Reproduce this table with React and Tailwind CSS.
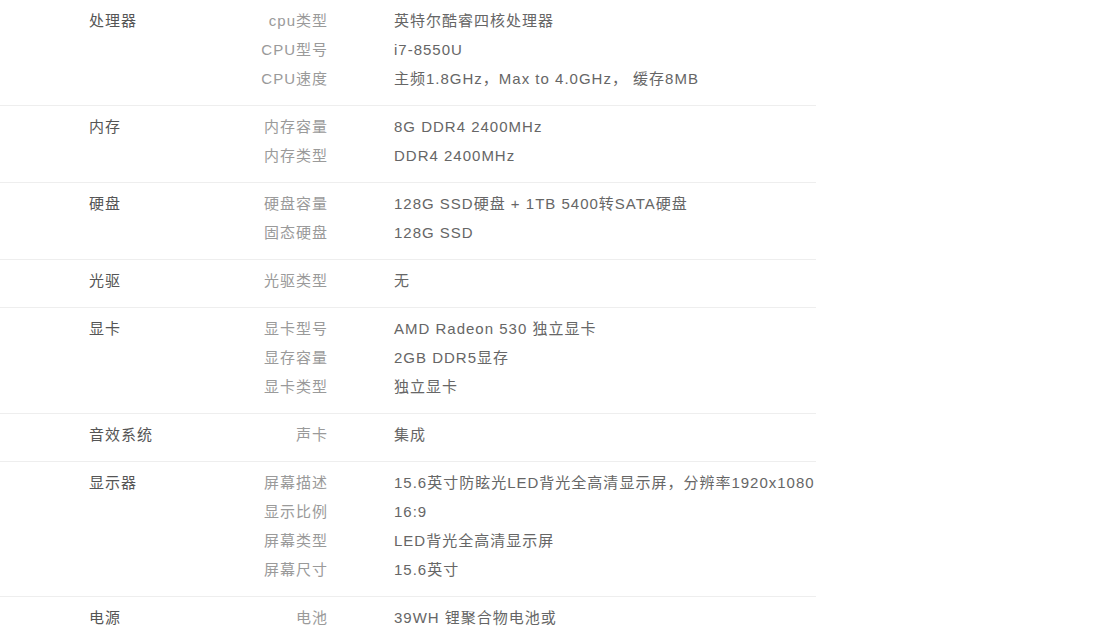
const specs = [
  {
    name: "处理器",
    rows: [
      ["cpu类型", "英特尔酷睿四核处理器"],
      ["CPU型号", "i7-8550U"],
      ["CPU速度", "主频1.8GHz，Max to 4.0GHz， 缓存8MB"],
    ],
  },
  {
    name: "内存",
    rows: [
      ["内存容量", "8G DDR4 2400MHz"],
      ["内存类型", "DDR4 2400MHz"],
    ],
  },
  {
    name: "硬盘",
    rows: [
      ["硬盘容量", "128G SSD硬盘 + 1TB 5400转SATA硬盘"],
      ["固态硬盘", "128G SSD"],
    ],
  },
  { name: "光驱", rows: [["光驱类型", "无"]] },
  {
    name: "显卡",
    rows: [
      ["显卡型号", "AMD Radeon 530 独立显卡"],
      ["显存容量", "2GB DDR5显存"],
      ["显卡类型", "独立显卡"],
    ],
  },
  { name: "音效系统", rows: [["声卡", "集成"]] },
  {
    name: "显示器",
    rows: [
      ["屏幕描述", "15.6英寸防眩光LED背光全高清显示屏，分辨率1920x1080"],
      ["显示比例", "16:9"],
      ["屏幕类型", "LED背光全高清显示屏"],
      ["屏幕尺寸", "15.6英寸"],
    ],
  },
  { name: "电源", rows: [["电池", "39WH 锂聚合物电池或"]] },
];

export default function App() {
  return (
    <div
      className="w-[816px] bg-white text-[15px] leading-[29px] tracking-[1px]"
      style={{ fontFamily: '"Liberation Sans", "Noto Sans CJK SC", sans-serif' }}
    >
      {specs.map((group) => (
        <div key={group.name} className="flex border-b border-[#eeeeee] pt-[6px] pb-[12px]">
          <div className="w-[240px] shrink-0 pl-[89px] text-[#555555]">{group.name}</div>
          <div className="flex flex-col">
            {group.rows.map(([label, value]) => (
              <div key={label} className="flex">
                <div className="w-[88px] shrink-0 text-right text-[#9a9a9a]">{label}</div>
                <div className="ml-[66px] whitespace-nowrap text-[#666666]">{value}</div>
              </div>
            ))}
          </div>
        </div>
      ))}
    </div>
  );
}
